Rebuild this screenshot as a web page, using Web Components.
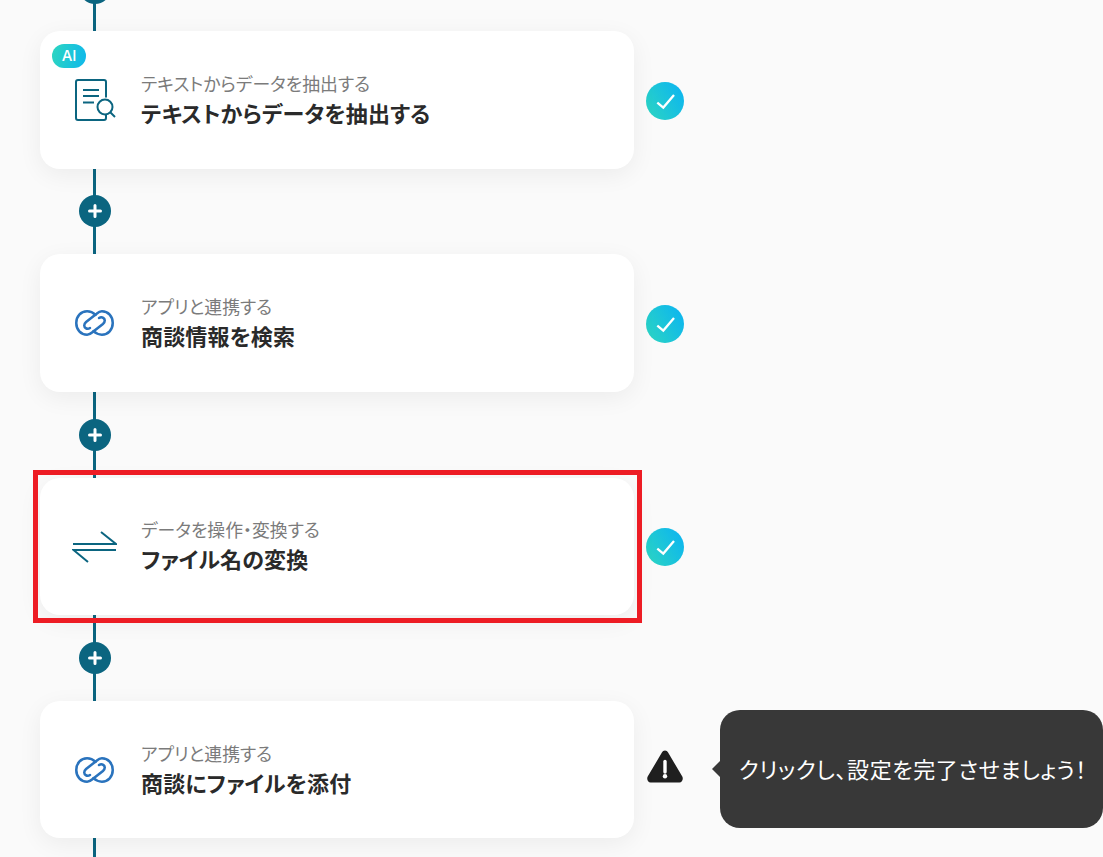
<!DOCTYPE html>
<html lang="ja">
<head>
<meta charset="utf-8">
<title>フロー</title>
<style>
  html, body { margin: 0; height: 857px; overflow: hidden; background: #fafafa; }
  body { font-family: "Noto Sans CJK JP", "Noto Sans", sans-serif; }
  flow-list { margin-top: -54.83px; }
</style>
</head>
<body>
<flow-list>
  <flow-connector></flow-connector>
  <flow-step status="done" ai>
    <step-icon slot="icon" name="extract"></step-icon>
    <span slot="label">テキストからデータを抽出する</span>
    <span slot="title">テキストからデータを抽出する</span>
  </flow-step>
  <flow-connector></flow-connector>
  <flow-step status="done">
    <step-icon slot="icon" name="link"></step-icon>
    <span slot="label">アプリと連携する</span>
    <span slot="title">商談情報を検索</span>
  </flow-step>
  <flow-connector></flow-connector>
  <flow-step status="done" highlighted>
    <step-icon slot="icon" name="convert"></step-icon>
    <span slot="label">データを操作・変換する</span>
    <span slot="title">ファイル名の変換</span>
  </flow-step>
  <flow-connector></flow-connector>
  <flow-step status="warn" tip="クリックし、設定を完了させましょう！">
    <step-icon slot="icon" name="link"></step-icon>
    <span slot="label">アプリと連携する</span>
    <span slot="title">商談にファイルを添付</span>
  </flow-step>
  <flow-connector></flow-connector>
</flow-list>

<script>
class FlowList extends HTMLElement {
  connectedCallback() {
    this.attachShadow({ mode: 'open' });
    this.shadowRoot.innerHTML = `
      <style>
        :host { display: block; }
        .list { display: flex; flex-direction: column; padding-left: 40px; }
      </style>
      <div class="list"><slot></slot></div>
    `;
  }
}

class FlowConnector extends HTMLElement {
  connectedCallback() {
    this.attachShadow({ mode: 'open' });
    this.shadowRoot.innerHTML = `
      <style>
        :host { display: flex; width: 594px; height: 85.83px; flex: none; }
        .wrap { width: 32px; margin-left: 39px; display: flex; justify-content: center; align-items: center;
          background: linear-gradient(#0b6580, #0b6580) 14px 0 / 3px 100% no-repeat; }
        .plus { width: 32px; height: 32px; border-radius: 50%; background: #0b6580; display: flex; align-items: center; justify-content: center; }
      </style>
      <div class="wrap">
        <div class="plus">
          <svg width="14" height="14" viewBox="0 0 14 14"><path d="M7 1.500v11M1.500 7h11" stroke="#fff" stroke-width="3" stroke-linecap="round"/></svg>
        </div>
      </div>
    `;
  }
}

class FlowStep extends HTMLElement {
  connectedCallback() {
    this.attachShadow({ mode: 'open' });
    const status = this.getAttribute('status');
    const tip = this.getAttribute('tip');
    const statusIcon = status === 'done'
      ? `<svg width="38" height="38" viewBox="0 0 38 38">
           <defs><linearGradient id="g" x1="0" y1="1" x2="1" y2="0.4"><stop offset="0" stop-color="#2dd6c0"/><stop offset="1" stop-color="#0fb8ec"/></linearGradient></defs>
           <circle cx="19" cy="19" r="19" fill="url(#g)"/>
           <path d="M11.300 20.600l6 5L28 13" fill="none" stroke="#fff" stroke-width="2.300"/>
         </svg>`
      : `<svg width="38" height="33" viewBox="0 0 38 33">
           <path d="M19 .5c-1.400 0-2.400.8-3.100 2L1.700 26.600C.4 29 1.900 32.500 4.600 32.500h28.800c2.700 0 4.200-3.500 2.900-5.900L22.100 2.500C21.400 1.300 20.400.5 19 .5z" fill="#1f1f1f"/>
           <path d="M19 11.500v10.500" stroke="#fff" stroke-width="3.400" stroke-linecap="round"/>
           <circle cx="19" cy="26.300" r="2.200" fill="#fff"/>
         </svg>`;
    this.shadowRoot.innerHTML = `
      <style>
        :host { display: flex; align-items: center; height: 137.5px; flex: none; }
        .card { position: relative; width: 594px; height: 100%; box-sizing: border-box; background: #fff; border-radius: 20px;
          box-shadow: 0 6px 24px rgba(0,0,0,0.06); display: flex; align-items: center; padding-left: 30px; gap: 18.5px;
          font-feature-settings: "palt"; }
        .icon { width: 56px; display: flex; justify-content: center; margin-left: -3.5px; }
        .text { display: flex; flex-direction: column; }
        .label { font-size: 17.85px; line-height: 24px; color: #7b7b7b; }
        .title { font-size: 22px; line-height: 34px; font-weight: 700; color: #2a2a2a; letter-spacing: .15px; }
        .ai { position: absolute; left: 12px; top: 13px; width: 34px; height: 24px; border-radius: 12px;
          background: linear-gradient(100deg, #2dd6c0, #0fb8ec); color: #fff; font: 500 15px/24px Inter, "Noto Sans", sans-serif; text-align: center; }
        .mark { position: absolute; left: -7px; top: -8px; right: -8px; bottom: -8px; border: 5px solid #ed1c24; pointer-events: none; }
        .status { width: 38px; margin-left: 12px; display: flex; justify-content: center; }
        .status.done { margin-top: 2px; }
        .status.warn { margin-bottom: 6.5px; }
        .tip { position: relative; margin-left: 36px; margin-bottom: 2px; width: 383px; height: 118px; box-sizing: border-box; background: #383838; border-radius: 20px;
          color: #fff; font-size: 22px; letter-spacing: .6px; font-feature-settings: "palt"; display: flex; align-items: center; padding: 0 0 2px 19px; white-space: nowrap; flex: none; }
        .tip::before { content: ""; position: absolute; left: -8px; top: 50%; margin-top: -8px; border: 8px solid transparent; border-left: 0; border-right-color: #383838; }
      </style>
      <div class="card">
        ${this.hasAttribute('ai') ? '<div class="ai">AI</div>' : ''}
        <div class="icon"><slot name="icon"></slot></div>
        <div class="text">
          <div class="label"><slot name="label"></slot></div>
          <div class="title"><slot name="title"></slot></div>
        </div>
        ${this.hasAttribute('highlighted') ? '<div class="mark"></div>' : ''}
      </div>
      <div class="status ${status}">${statusIcon}</div>
      ${tip ? `<div class="tip">${tip}</div>` : ''}
    `;
  }
}

const ICONS = {
  extract: `<svg width="42" height="42" viewBox="0 0 42 42" fill="none" stroke="#0b6580" stroke-width="2">
      <path d="M32 18.500V3a2 2 0 0 0-2-2H4a2 2 0 0 0-2 2v36a2 2 0 0 0 2 2h26a2 2 0 0 0 2-2v-3"/>
      <path d="M9 11h16M9 17h16M9 23.500h11"/>
      <circle cx="31" cy="28" r="7.500"/>
      <path d="M36.500 33.500l4.500 4.500"/>
    </svg>`,
  link: `<svg width="39" height="26" viewBox="0 0 37 24.500" fill="none" stroke="#2a73bd" stroke-width="2.400" stroke-linecap="round">
      <path d="M19.500 4.500C17 2.200 14 1.200 11.500 1.200 5.500 1.200 1.200 6 1.200 12.200c0 6.300 4.300 11.100 10.300 11.100 2 0 3.500-1 5-2.300l10-7.800c2.500-2.200 2-4.700.3-5.800-1.300-.9-2.800-.7-4 .1"/>
      <path d="M17.500 20c2.500 2.300 5.500 3.300 8 3.300 6 0 10.300-4.800 10.300-11 0-6.300-4.300-11.100-10.300-11.100-2 0-3.500 1-5 2.300l-10 7.800c-2.500 2.200-2 4.700-.3 5.800 1.300.9 2.800.7 4-.1"/>
    </svg>`,
  convert: `<svg width="45" height="33" viewBox="0 0 45 33" fill="none" stroke="#0b6580" stroke-width="2">
      <path d="M1 14h43L29 2"/>
      <path d="M44 20H1.500L16 32"/>
    </svg>`
};

class StepIcon extends HTMLElement {
  connectedCallback() {
    this.attachShadow({ mode: 'open' });
    this.shadowRoot.innerHTML = `
      <style>:host { display: flex; }</style>
      ${ICONS[this.getAttribute('name')]}
    `;
  }
}

customElements.define('flow-list', FlowList);
customElements.define('flow-connector', FlowConnector);
customElements.define('flow-step', FlowStep);
customElements.define('step-icon', StepIcon);
</script>
</body>
</html>
